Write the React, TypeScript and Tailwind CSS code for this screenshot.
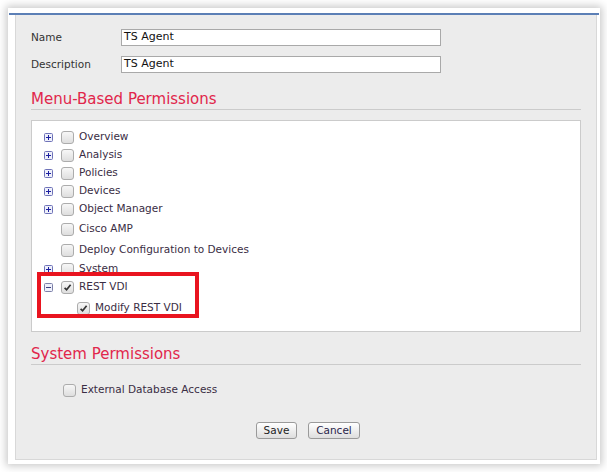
import React from "react";

/* ── Tree data ─────────────────────────────────────────────────────────── */
type Row = {
  label: string;
  expander?: "plus" | "minus";
  checked?: boolean;
  indent?: boolean;
  h: string;
};

const ROWS: Row[] = [
  { label: "Overview", expander: "plus", h: "h-[18px]" },
  { label: "Analysis", expander: "plus", h: "h-[18px]" },
  { label: "Policies", expander: "plus", h: "h-[18px]" },
  { label: "Devices", expander: "plus", h: "h-[18px]" },
  { label: "Object Manager", expander: "plus", h: "h-[18px]" },
  { label: "Cisco AMP", h: "h-[22px]" },
  { label: "Deploy Configuration to Devices", h: "h-[20px]" },
  { label: "System", expander: "plus", h: "h-[18px]" },
  { label: "REST VDI", expander: "minus", checked: true, h: "h-[18px]" },
  { label: "Modify REST VDI", checked: true, indent: true, h: "h-[24px]" },
];

const FONT = "font-['DejaVu_Sans',sans-serif]";

/* ── Small pieces ──────────────────────────────────────────────────────── */
function Expander({ kind }: { kind: "plus" | "minus" }) {
  return (
    <svg width="9" height="9" viewBox="0 0 9 9" className="block">
      <rect x="0.5" y="0.5" width="8" height="8" rx="1" fill="#eef0fa" stroke={kind === "plus" ? "#6f73b8" : "#7d80a8"} />
      <line x1="2" y1="4.5" x2="7" y2="4.5" stroke={kind === "plus" ? "#1c1fa0" : "#3b3e80"} />
      {kind === "plus" && <line x1="4.5" y1="2" x2="4.5" y2="7" stroke="#1c1fa0" />}
    </svg>
  );
}

function Checkbox({ checked }: { checked?: boolean }) {
  return (
    <span className="w-[13px] h-[13px] rounded-[3px] border border-[#acacac] bg-gradient-to-b from-[#f7f7f7] to-[#dedede] flex items-center justify-center shrink-0">
      {checked && (
        <svg width="9" height="9" viewBox="0 0 9 9">
          <path d="M1.6 4.8 L3.6 6.8 L7.6 1.8" fill="none" stroke="#333" strokeWidth="1.7" />
        </svg>
      )}
    </span>
  );
}

function SectionHeading({ children }: { children: React.ReactNode }) {
  return (
    <div className="border-b border-[#cbcbcb] h-[21px] flex items-center">
      <span className="text-[15px] leading-none text-[#e1264b]">{children}</span>
    </div>
  );
}

/* ── Page ──────────────────────────────────────────────────────────────── */
export default function App() {
  return (
    <div className={`w-[607px] h-[472px] bg-white overflow-hidden pt-[8px] pl-[8px] ${FONT}`}>
      <div className="w-[592px] h-[456px] bg-white shadow-[0_0_8px_2px_rgba(0,0,0,0.22)] pt-[5px] flex flex-col">
        <div className="h-[2px] mx-[1px] bg-[#5c7fb6]" />
        <div className="flex-1 ml-[7px] mr-[3px] mb-[4px] bg-[#ececec] border-x border-b border-[#d8d8d8] pl-[15px] pr-[15px] pt-[14px] text-[10.5px] text-[#333]">

          {/* Name / Description */}
          <div className="flex items-center h-[17px]">
            <span className="w-[90px]">Name</span>
            <div className="w-[320px] h-[17px] bg-white border border-[#a9a9a9] flex items-center px-[2px] text-[11px] text-[#111]">
              TS Agent
            </div>
          </div>
          <div className="flex items-center h-[17px] mt-[10px]">
            <span className="w-[90px]">Description</span>
            <div className="w-[320px] h-[17px] bg-white border border-[#a9a9a9] flex items-center px-[2px] text-[11px] text-[#111]">
              TS Agent
            </div>
          </div>

          {/* Menu-Based Permissions */}
          <div className="mt-[16px]">
            <SectionHeading>Menu-Based Permissions</SectionHeading>
          </div>

          <div className="relative mt-[10px] w-[550px] h-[212px] bg-white border border-[#cbcbcb] pt-[7px] pl-[12px]">
            {ROWS.map(r => (
              <div key={r.label} className={`flex items-center ${r.h}`}>
                <span className="w-[17px] flex items-center">
                  {r.expander && <Expander kind={r.expander} />}
                </span>
                {r.indent && <span className="w-[16px]" />}
                <Checkbox checked={r.checked} />
                <span className="ml-[5px] text-[#3a2d44]">{r.label}</span>
              </div>
            ))}

            {/* annotation box */}
            <div className="absolute left-[5px] top-[151px] w-[162px] h-[46px] border-[4px] border-[#e9141f]" />
          </div>

          {/* System Permissions */}
          <div className="mt-[12px]">
            <SectionHeading>System Permissions</SectionHeading>
          </div>

          <div className="flex items-center h-[18px] mt-[16px] pl-[32px]">
            <Checkbox />
            <span className="ml-[5px] text-[#3a2d44]">External Database Access</span>
          </div>

          <div className="flex justify-center gap-[11px] mt-[23px] pl-[4px]">
            <button className="w-[41px] h-[17px] rounded-[3px] border border-[#9a9a9a] bg-gradient-to-b from-white to-[#dedede] text-[10.5px] text-[#222] leading-none">
              Save
            </button>
            <button className="w-[52px] h-[17px] rounded-[3px] border border-[#9a9a9a] bg-gradient-to-b from-white to-[#dedede] text-[10.5px] text-[#2a1f4a] leading-none">
              Cancel
            </button>
          </div>
        </div>
      </div>
    </div>
  );
}
